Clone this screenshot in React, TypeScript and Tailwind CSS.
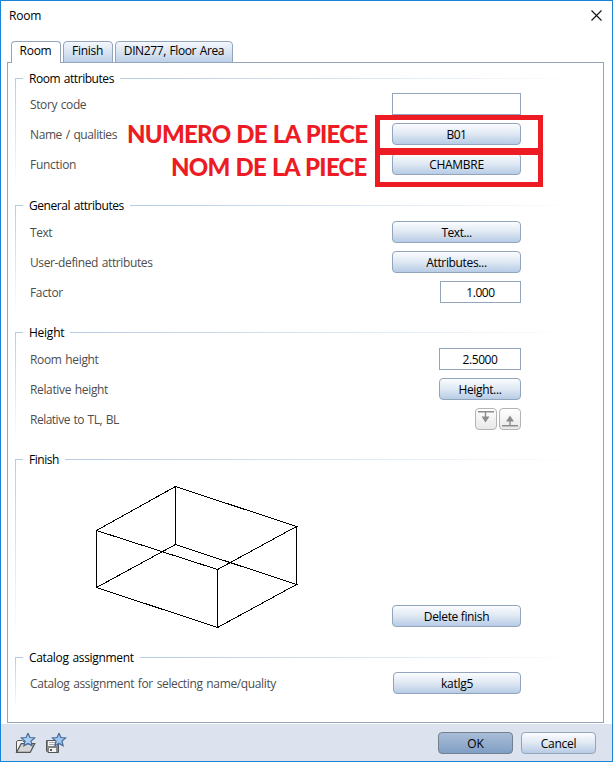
import type { ReactNode } from "react";

const buttonBase =
  "flex h-[22px] shrink-0 items-center justify-center rounded-[4px] border border-[#92a5bc] bg-linear-to-b from-[#fbfcfe] via-[#dfe8f3] to-[#b7cce5] pt-[2px] text-black";

function Button({ className, children }: { className: string; children: ReactNode }) {
  return (
    <button className={`${buttonBase} ${className}`}>
      <span>{children}</span>
    </button>
  );
}

function Field({ className, children }: { className: string; children?: ReactNode }) {
  return (
    <div className={`flex h-[22px] items-center justify-center border border-[#92a5bc] bg-white pt-[2px] text-black ${className}`}>
      {children}
    </div>
  );
}

function Row({ label, tracking, children }: { label: string; tracking: string; children: ReactNode }) {
  return (
    <div className="flex h-[30px] w-[505px] items-center justify-between pl-[14px]">
      <span className={`pt-[2px] text-[#4d4d4d] ${tracking}`}>{label}</span>
      {children}
    </div>
  );
}

function Group({
  title,
  tracking,
  height,
  rail,
  children,
}: {
  title: string;
  tracking: string;
  height: string;
  rail: string;
  children: ReactNode;
}) {
  return (
    <section className={`flex ${height}`}>
      <div className={`mt-[8px] w-px bg-linear-to-b from-[#b5cbe4] to-white ${rail}`} />
      <div className="flex w-[566px] flex-col">
        <div className="mb-[3px] flex h-[17px] shrink-0 items-center">
          <div className="h-px w-[7px] bg-[#b5cbe4]" />
          <h2 className={`mx-[6px] text-black ${tracking}`}>{title}</h2>
          <div className="h-px flex-1 bg-linear-to-r from-[#b5cbe4] to-white" />
        </div>
        {children}
      </div>
    </section>
  );
}

const star = "M0 -6.8 L1.9 -2.5 L6.6 -2 L3 1.1 L4.1 5.8 L0 3.4 L-4.1 5.8 L-3 1.1 L-6.6 -2 L-1.9 -2.5 Z";

function FavoriteOpen() {
  return (
    <svg width="22" height="22" viewBox="0 0 22 22">
      <path d="M1.5 19V8.5L3 7.5H7L8 8.5H15.5V11" fill="#f3f3f3" stroke="#555" />
      <path d="M1.6 19.3L6.2 10.7H19.8L15.2 19.3Z" fill="#d5d5d5" stroke="#555" strokeWidth="1.2" />
      <path d={star} transform="translate(13 7)" fill="#add0f2" stroke="#45699b" strokeWidth="1.2" />
    </svg>
  );
}

function FavoriteSave() {
  return (
    <svg width="22" height="22" viewBox="0 0 22 22">
      <path d="M1.5 7.5H13.5V19.5H3L1.5 18Z" fill="#858585" stroke="#555" />
      <path d="M3 8H12V13H3Z" fill="#f2f2f2" />
      <path d="M4 9.5H11M4 11.5H11" stroke="#aaa" />
      <path d="M4 15H11V19H4Z" fill="#f2f2f2" />
      <path d="M5 16H7V18H5Z" fill="#555" />
      <path d={star} transform="translate(14 7)" fill="#9ec5ec" stroke="#45699b" strokeWidth="1.2" />
    </svg>
  );
}

function LevelButton({ up }: { up?: boolean }) {
  return (
    <button className="flex size-[22px] items-center justify-center rounded-[4px] border border-[#b3b3b3] bg-linear-to-b from-white to-[#e8e8e8]">
      <svg width="20" height="20" viewBox="0 0 20 20" fill="#8c8c8c">
        {up ? (
          <path d="M2 16H18V17.5H2ZM9.3 12H10.7V16H9.3ZM10 6.5L14 12.5H6Z" />
        ) : (
          <path d="M2 2H18V3.5H2ZM8.8 3.5H10.2V8H8.8ZM5.5 7.5H13.5L9.5 13.5Z" />
        )}
      </svg>
    </button>
  );
}

function RoomPreview() {
  return (
    <svg width="202" height="143" viewBox="0 0 202 143" fill="none" stroke="#000" shapeRendering="crispEdges">
      <path d="M79.5 .5L200.5 40.5L121.5 83.5L.5 44.5ZM79.5 58.5L200.5 98.5L121.5 141.5L.5 101.5ZM79.5 .5V58.5M200.5 40.5V98.5M121.5 83.5V141.5M.5 44.5V101.5" />
    </svg>
  );
}

export default function App() {
  return (
    <div className="relative flex h-[762px] w-[613px] flex-col overflow-hidden border border-[#1883d7] bg-white font-['Open_Sans','Noto_Sans',sans-serif] text-[12px] leading-[16px] [word-spacing:1px] whitespace-nowrap">
      <header className="flex h-[40px] shrink-0 items-start justify-between pt-[7px] pr-[10px] pl-[8px] text-black">
        <h1 className="tracking-[-0.2px]">Room</h1>
        <svg className="mt-[2px]" width="11" height="11" viewBox="0 0 11 11" stroke="#111" strokeWidth="1.1">
          <path d="M.5 .5L10.5 10.5M10.5 .5L.5 10.5" />
        </svg>
      </header>

      <nav className="z-10 -mb-px ml-[10px] flex h-[22px] shrink-0 items-start gap-[2px] text-black">
        <div className="flex h-[22px] w-[50px] justify-center rounded-t-[4px] border border-b-0 border-[#92a5bc] bg-white pt-px pr-px tracking-[-0.3px]">Room</div>
        <div className="flex h-[22px] w-[50px] justify-center rounded-t-[4px] border border-[#92a5bc] bg-linear-to-b from-[#f5f8fc] to-[#bdd0e7] pt-px pr-px tracking-[-0.3px]">Finish</div>
        <div className="flex h-[22px] w-[118px] justify-center rounded-t-[4px] border border-[#92a5bc] bg-linear-to-b from-[#f5f8fc] to-[#bdd0e7] pt-px tracking-[-0.4px]">DIN277, Floor Area</div>
      </nav>

      <main className="mx-[6px] mr-[8px] flex h-[661px] shrink-0 flex-col border border-[#92a5bc] pt-[7px] pl-[7px]">
        <Group title="Room attributes" tracking="tracking-[-0.45px]" height="h-[127px]" rail="h-[110px]">
          <div className="-mt-px">
            <Row label="Story code" tracking="tracking-[-0.4px]"><Field className="w-[129px]" /></Row>
            <Row label="Name / qualities" tracking="tracking-[-0.4px]"><Button className="w-[129px] tracking-[-0.5px]">B01</Button></Row>
            <Row label="Function" tracking="tracking-[-0.3px]"><Button className="w-[129px] tracking-[-0.3px]">CHAMBRE</Button></Row>
          </div>
        </Group>
        <Group title="General attributes" tracking="tracking-[-0.45px]" height="h-[127px]" rail="h-[110px]">
          <Row label="Text" tracking="tracking-[-0.45px]"><Button className="w-[129px] tracking-[-0.45px]">Text...</Button></Row>
          <Row label="User-defined attributes" tracking="tracking-[-0.38px]"><Button className="w-[129px] tracking-[-0.35px]">Attributes...</Button></Row>
          <Row label="Factor" tracking="tracking-[-0.35px]"><Field className="w-[81px] tracking-[-0.4px]">1.000</Field></Row>
        </Group>
        <Group title="Height" tracking="tracking-[-0.25px]" height="h-[127px]" rail="h-[110px]">
          <Row label="Room height" tracking="tracking-[-0.35px]"><Field className="w-[82px] tracking-[-0.4px]">2.5000</Field></Row>
          <Row label="Relative height" tracking="tracking-[-0.35px]"><Button className="w-[82px] tracking-[-0.35px]">Height...</Button></Row>
          <Row label="Relative to TL, BL" tracking="tracking-[-0.5px]">
            <div className="flex gap-[2px]"><LevelButton /><LevelButton up /></div>
          </Row>
        </Group>
        <Group title="Finish" tracking="tracking-[-0.45px]" height="h-[198px]" rail="h-[180px]">
          <div className="flex w-[505px] items-start justify-between pt-[15px] pl-[80px]">
            <RoomPreview />
            <Button className="mt-[119px] w-[129px] tracking-[-0.35px]">Delete finish</Button>
          </div>
        </Group>
        <Group title="Catalog assignment" tracking="tracking-[-0.33px]" height="h-[70px]" rail="h-[52px]">
          <div className="-mt-[1px]">
            <Row label="Catalog assignment for selecting name/quality" tracking="tracking-[-0.36px]"><Button className="w-[128px] tracking-[-0.25px]">katlg5</Button></Row>
          </div>
        </Group>
      </main>

      <footer className="mt-px flex h-[37px] shrink-0 items-center bg-[#dce3ee] pr-[16px] pl-[14px]">
        <div className="pt-[2px]"><FavoriteOpen /></div>
        <div className="ml-[8px] pt-[2px]"><FavoriteSave /></div>
        <button className="ml-auto flex h-[22px] w-[75px] items-center justify-center rounded-[4px] border border-[#72808f] bg-linear-to-b from-[#a9bdd7] to-[#809fc4] pt-[2px] text-black">OK</button>
        <Button className="ml-[8px] w-[75px] tracking-[-0.25px]">Cancel</Button>
      </footer>

      <div className="absolute top-[114px] left-[374px] h-[38px] w-[168px] border-5 border-[#ed1c24]" />
      <div className="absolute top-[149px] left-[374px] h-[37px] w-[168px] border-5 border-[#ed1c24]" />
      <div className="absolute top-[117px] left-[126px] font-[Lato] text-[24px] leading-[32px] font-black tracking-[-0.75px] text-[#ed1c24]">NUMERO DE LA PIECE</div>
      <div className="absolute top-[150px] left-[170px] font-[Lato] text-[24px] leading-[32px] font-black tracking-[-0.75px] text-[#ed1c24]">NOM DE LA PIECE</div>
    </div>
  );
}
